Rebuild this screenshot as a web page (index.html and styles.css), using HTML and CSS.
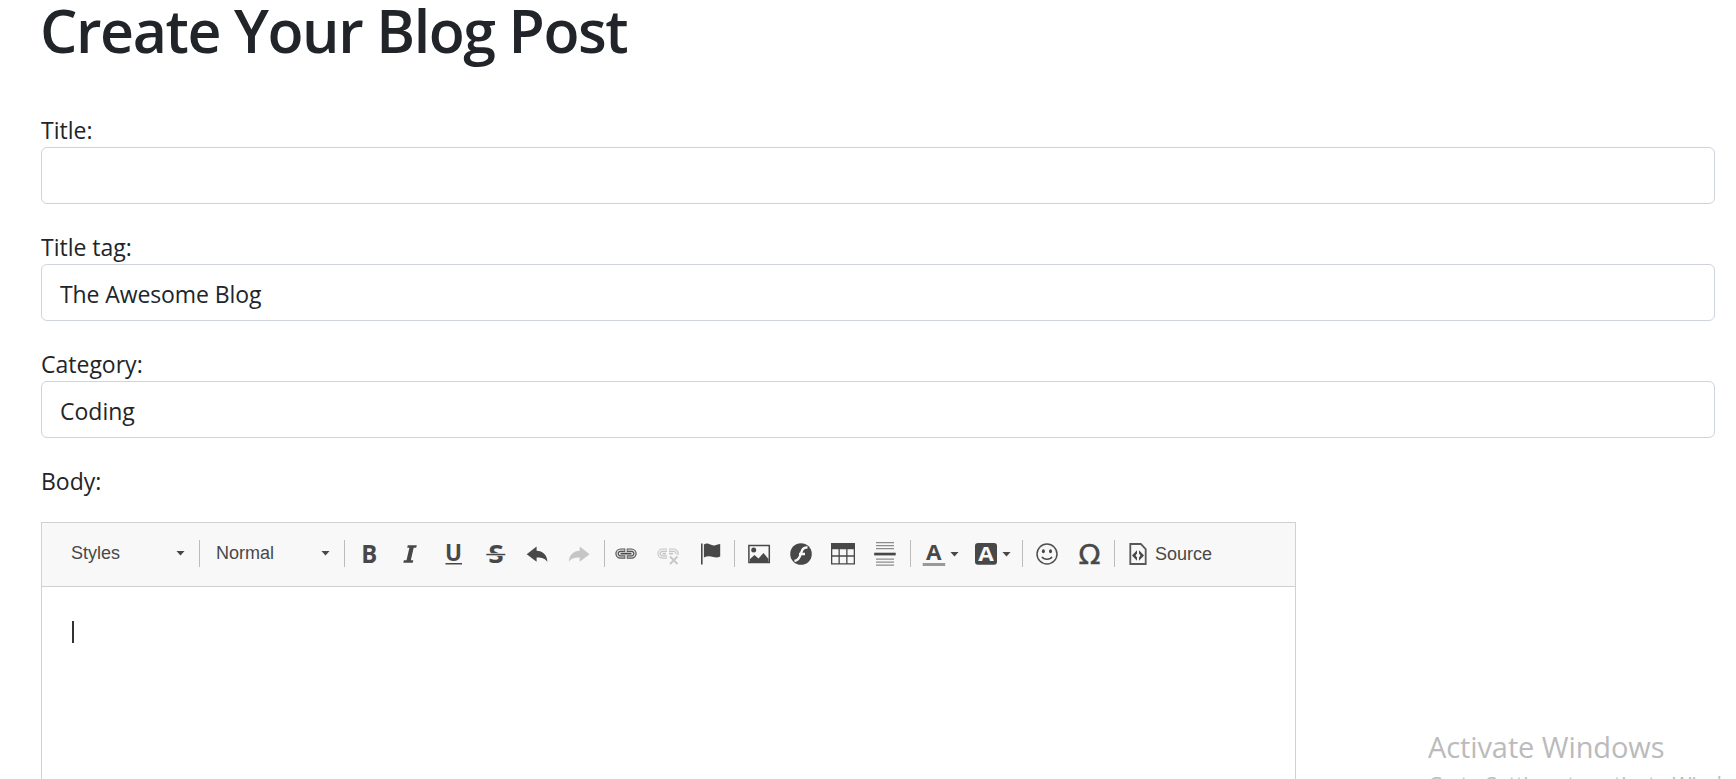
FILE: index.html
```
<!DOCTYPE html>
<html lang="en">
<head>
<meta charset="utf-8">
<title>The Awesome Blog</title>
<link rel="stylesheet" href="styles.css">
</head>
<body>
<main class="page">
  <h1 class="heading">Create Your Blog Post</h1>
  <form class="form">
    <div class="field"><label for="t">Title:</label><input id="t" class="control" type="text"></div>
    <div class="field"><label for="g">Title tag:</label><input id="g" class="control" type="text" value="The Awesome Blog"></div>
    <div class="field"><label for="c">Category:</label><div id="c" class="control">Coding</div></div>
    <div class="body-label">Body:</div>
    <div class="editor">
      <div class="toolbar">
        <div class="combo"><span>Styles</span><i class="arrow"></i></div>
        <i class="sep"></i>
        <div class="combo combo-format"><span>Normal</span><i class="arrow"></i></div>
        <i class="sep"></i>
        <div class="group group-basic">
          <span class="btn"><svg viewBox="0 0 24 24"><text class="glyph" x="3.2" y="20.8" font-size="25" textLength="16" lengthAdjust="spacingAndGlyphs">B</text></svg></span>
          <span class="btn"><svg viewBox="0 0 24 24"><path d="M7.800 3.200h9l-.6 2.600h-2.500l-2.900 12.400h2.500l-.6 2.600h-9.400l.6-2.600h2.600l2.900-12.400h-2.200z"/></svg></span>
          <span class="btn"><svg viewBox="0 0 24 24"><text class="glyph" x="3" y="19" font-size="23" textLength="17" lengthAdjust="spacingAndGlyphs">U</text><path d="M3.500 21h16.500v1.500h-16.500z"/></svg></span>
          <span class="btn"><svg viewBox="0 0 24 24"><text class="glyph" x="4.200" y="20.600" font-size="25" textLength="15.500" lengthAdjust="spacingAndGlyphs">S</text><path class="cut" d="M2 11.200h20v2.700h-20z"/><path d="M2.300 11.800h19v1.500h-19z"/></svg></span>
          <span class="btn"><svg viewBox="0 0 24 24"><path d="M.7 12.200 10.600 4.500v4.200c6 .2 10.500 4 10.800 11-2.500-3.500-5.500-4.400-10.800-4.300v4.400z"/></svg></span>
          <span class="btn off"><svg viewBox="0 0 24 24"><path d="M21.600 12.200 11.700 4.500v4.200c-6 .2-10.500 4-10.800 11 2.500-3.500 5.500-4.400 10.800-4.300v4.400z"/></svg></span>
        </div>
        <i class="sep"></i>
        <div class="group group-links">
          <span class="btn"><svg viewBox="0 0 24 24"><g fill="none"><path stroke="#555" stroke-width="3.600" d="M11.300 8.200H6.500a3.400 3.400 0 0 0 0 6.800h4.800M12.700 8.200h4.800a3.400 3.400 0 0 1 0 6.800h-4.800"/><path stroke="#ddd" stroke-width="1.200" d="M10.500 8.200H6.500a3.400 3.400 0 0 0 0 6.800h4M13.500 8.200h4a3.400 3.400 0 0 1 0 6.800h-4"/><path stroke="#484848" stroke-width="1.800" d="M6.500 11.600h11"/></g></svg></span>
          <span class="btn off"><svg viewBox="0 0 24 24"><g fill="none" stroke="#c6c6c6"><path stroke-width="3.400" d="M10.900 8.200H6.500a3.400 3.400 0 0 0 0 6.800h4.400M13.100 8.200h4.400a3.400 3.400 0 0 1 3.400 4.400"/><path stroke="#f4f4f4" stroke-width="1.200" d="M10.500 8.200H6.500a3.400 3.400 0 0 0 0 6.800h4M13.500 8.200h4a3.400 3.400 0 0 1 3.400 4"/><path stroke-width="1.800" d="M6.500 11.600h3.500m3 0h4M14 14.500l7.500 7.500M21.500 14.500 14 22"/></g></svg></span>
          <span class="btn"><svg viewBox="0 0 24 24"><path d="M3 1.500h1.600v21h-1.600zM5.900 2.600c4-3 7 1.500 10.500.8 2.500-.3 4-1.400 5.800-1.400v12.600c-2 1-4.500 1.300-7 .5-3-1-6-1.200-9.300.4z"/></svg></span>
        </div>
        <i class="sep"></i>
        <div class="group group-insert">
          <span class="btn"><svg viewBox="0 0 24 24"><path d="M1.900 3.500h20.400v17h-20.400z" fill="none" stroke="#484848" stroke-width="1.500"/><circle cx="6.700" cy="8" r="2.500"/><path d="M3 20v-3l4.500-4 4 3.500 5-5.500 5 6v3z"/></svg></span>
          <span class="btn"><svg viewBox="0 0 24 24"><circle cx="12" cy="12" r="10.800"/><path d="M18.500 5.500c-5-.5-5.500 3-6.700 6.500-1.100 3.800-2.500 6.500-6.300 7M10 12h6" fill="none" stroke="#f8f8f8" stroke-width="2.400"/></svg></span>
          <span class="btn"><svg viewBox="0 0 24 24"><path fill-rule="evenodd" d="M0 1h24v21.500H0zM1.300 7.200v6h6.200v-6zM8.800 7.200v6h6.400v-6zM16.500 7.200v6h6.200v-6zM1.300 14.700v6.500h6.200v-6.500zM8.800 14.700v6.500h6.400v-6.500zM16.500 14.700v6.500h6.200v-6.500z"/></svg></span>
          <span class="btn"><svg viewBox="0 0 24 24"><path fill="#8c8c8c" d="M3 0h18v1.300H3zM3 3h18v1.300H3zM3 6h18v1.300H3zM3 16.500h18v1.300H3zM3 19.500h18v1.300H3zM3 22.500h18v1.300H3z"/><path d="M1.200 10.700h21.500v2.700H1.200z"/></svg></span>
        </div>
        <i class="sep"></i>
        <div class="group group-colors">
          <span class="btn btn-menu"><svg viewBox="0 0 24 24"><text class="glyph" x="4" y="18" font-size="21" textLength="15.500" lengthAdjust="spacingAndGlyphs">A</text><path fill="#999" d="M.7 21h22.500v3H.7z"/></svg><i class="arrow"></i></span>
          <span class="btn btn-menu"><svg viewBox="0 0 24 24"><rect x="1" y="1.100" width="22" height="21.700" rx="3"/><text class="glyph light" x="4.200" y="19" font-size="20" textLength="15.500" lengthAdjust="spacingAndGlyphs">A</text></svg><i class="arrow"></i></span>
        </div>
        <i class="sep"></i>
        <div class="group group-symbols">
          <span class="btn"><svg viewBox="0 0 24 24"><circle cx="12" cy="12" r="10" fill="none" stroke="#505050" stroke-width="1.500"/><ellipse cx="8.400" cy="9.300" rx="1.500" ry="2"/><ellipse cx="15.500" cy="9.300" rx="1.500" ry="2"/><path d="M7 14.800c2 3.200 8 3.200 10 0" fill="none" stroke="#484848" stroke-width="1.600"/></svg></span>
          <span class="btn"><svg viewBox="0 0 24 24"><text class="omega" x="1.500" y="22" font-size="26.500" textLength="22" lengthAdjust="spacingAndGlyphs">Ω</text></svg></span>
        </div>
        <i class="sep"></i>
        <span class="source"><svg viewBox="0 0 24 24"><path d="M4.300 2h10.500l4.900 5.200V22H4.300z" fill="none" stroke="#585858" stroke-width="1.800"/><path d="M11 8.300v3.200l-1.500 2 1.500 2v3.200l-5-5.200zM13 8.300v3.200l1.500 2-1.500 2v3.200l5-5.200z"/></svg><span>Source</span></span>
      </div>
      <div class="content"><i class="caret"></i></div>
    </div>
  </form>
</main>
<aside class="watermark"><div class="wm-title">Activate Windows</div><div class="wm-sub">Go to Settings to activate Windows.</div></aside>
</body>
</html>
```
FILE: styles.css
```
* { box-sizing: border-box; }
html, body { height: 100%; }
body { margin: 0; overflow: hidden; background: #fff; color: #212529; font: 23px/36px "Open Sans", "Noto Sans", sans-serif; }
.page { height: 779px; padding: 0 21px 0 41px; }
.heading { margin: 0; height: 111px; font-size: 59px; font-weight: 600; line-height: 60px; letter-spacing: -1.4px; white-space: nowrap; text-indent: -1px; }
.field { height: 117px; }
.field label { display: block; height: 36px; padding-top: 1px; }
.control { display: block; width: 100%; height: 57px; padding: 4px 18px 0; border: 1px solid #ced4da; border-radius: 6px; background: #fff; color: #212529; font: inherit; line-height: 50px; outline: 0; }
input.control { padding-top: 3px; line-height: normal; letter-spacing: -0.1px; }
.body-label { height: 60px; padding-top: 1px; }
.editor { width: 1255px; height: 257px; border: 1px solid #d1d1d1; border-bottom: 0; }
.toolbar { display: flex; align-items: flex-start; height: 64px; padding: 17px 0 0 29px; background: #f8f8f8; border-bottom: 1px solid #d1d1d1; color: #484848; font: 18px/27px "Liberation Sans", sans-serif; }
.sep { flex: none; width: 1px; height: 27px; background: #bcbcbc; }
.combo { display: flex; align-items: center; justify-content: space-between; width: 128px; height: 26px; padding-right: 14px; }
.combo-format { width: 144px; padding-left: 16px; }
.arrow { flex: none; width: 9px; height: 5px; background: #484848; clip-path: polygon(0 0, 100% 0, 50% 100%); }
.group { display: flex; }
.group-basic { padding: 0 3px 0 4px; }
.group-links { width: 129px; }
.group-insert { width: 175px; padding-left: 3px; }
.group-colors { width: 111px; padding-left: 2px; }
.group-symbols { width: 91px; padding-left: 3px; }
.btn { display: flex; align-items: center; justify-content: center; width: 42px; height: 28px; }
.btn-menu { width: 52px; gap: 4px; justify-content: flex-start; padding-left: 9px; }
svg { flex: none; width: 24px; height: 24px; fill: #484848; overflow: visible; }
.off svg { fill: #c6c6c6; }
.glyph { font-family: "Open Sans", sans-serif; font-weight: 700; }
.light { fill: #f8f8f8; }
.cut { fill: #f8f8f8; }
.omega { font-family: "DejaVu Sans", sans-serif; stroke: #484848; stroke-width: 0.4px; }
.source { display: flex; align-items: center; gap: 5px; height: 28px; padding-left: 11px; }
.content { padding: 34px 30px; }
.caret { display: block; width: 2px; height: 22px; background: #333; }
.watermark { position: absolute; left: 1428px; top: 727px; width: 308px; height: 52px; overflow: hidden; color: #bbb; white-space: nowrap; }
.wm-title { font-size: 29px; line-height: 40px; letter-spacing: -0.1px; }
.wm-sub { font-size: 20.6px; line-height: 32px; }
```
